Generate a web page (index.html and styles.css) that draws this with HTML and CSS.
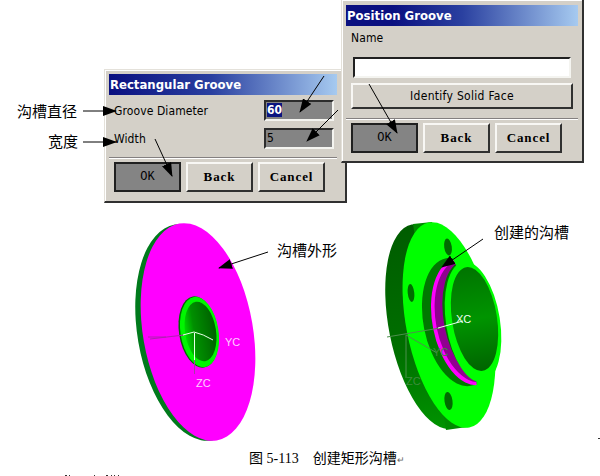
FILE: index.html
```html
<!DOCTYPE html>
<html lang="zh-CN">
<head>
  <meta charset="UTF-8">
  <title>图 5-113 创建矩形沟槽</title>
  <link rel="stylesheet" href="styles.css">
</head>
<body>
  <div class="figure">

    <!-- Dialogs -->
    <div class="dialog rect-groove">
      <div class="title">Rectangular Groove</div>
      <div class="fields">
        <div class="field"><span class="label">Groove Diameter</span><span class="value"><b>60</b></span></div>
        <div class="field"><span class="label">Width</span><span class="value">5</span></div>
      </div>
      <div class="buttons">
        <button class="btn ok">OK</button>
        <button class="btn">Back</button>
        <button class="btn">Cancel</button>
      </div>
    </div>

    <div class="dialog pos-groove">
      <div class="title">Position Groove</div>
      <div class="name-block">
        <span class="label">Name</span>
        <div class="name-input"></div>
        <button class="wide-btn">Identify Solid Face</button>
      </div>
      <div class="buttons">
        <button class="btn ok">OK</button>
        <button class="btn">Back</button>
        <button class="btn">Cancel</button>
      </div>
    </div>

    <!-- Solid models and arrows -->
    <svg class="drawing" width="600" height="476" viewBox="0 0 600 476">
      <defs>
        <marker id="head" markerWidth="14" markerHeight="10" refX="13" refY="5" orient="auto" markerUnits="userSpaceOnUse">
          <path d="M0 0L14 5L0 10z"/>
        </marker>
        <linearGradient id="bore">
          <stop offset="0" stop-color="#00d800"/>
          <stop offset="0.3" stop-color="#009000"/>
          <stop offset="1" stop-color="#006000"/>
        </linearGradient>
        <linearGradient id="hubBore" x1="0" y1="0" x2="0" y2="1">
          <stop offset="0" stop-color="#007400"/>
          <stop offset="0.5" stop-color="#009400"/>
          <stop offset="1" stop-color="#006400"/>
        </linearGradient>
        <linearGradient id="rim" x1="0" y1="0" x2="0" y2="1">
          <stop offset="0" stop-color="#005c00"/>
          <stop offset="0.6" stop-color="#007000"/>
          <stop offset="1" stop-color="#009400"/>
        </linearGradient>
        <clipPath id="grooveSide">
          <path d="M410 250H448L474 300L477 400H410z"/>
        </clipPath>
      </defs>

      <!-- groove shape -->
      <ellipse cx="193.500" cy="332.500" rx="56" ry="109.500" transform="rotate(-9.8 193.500 332.500)" fill="#007a1c"/>
      <ellipse cx="198" cy="332" rx="55" ry="110" transform="rotate(-9.8 198 332)" fill="#f0f"/>
      <ellipse cx="198.500" cy="332" rx="19.500" ry="36" transform="rotate(-9 198.500 332)" fill="#006a00"/>
      <ellipse cx="199.500" cy="332" rx="19" ry="35.500" transform="rotate(-9 199.500 332)" fill="#00f600"/>
      <ellipse cx="200.500" cy="331.500" rx="15.500" ry="30" transform="rotate(-9 200.500 331.500)" fill="url(#bore)"/>
      <path d="M148 337H166M150 339L184 335" stroke="#b020b0" fill="none"/>
      <path d="M183 335L194 332Q203 334 213 340M194.500 333V360" stroke="#e8ffe8" fill="none"/>
      <path d="M194.500 360V374" stroke="#a040a0" fill="none"/>
      <text x="225" y="346" class="axis">YC</text>
      <text x="196" y="387" class="axis">ZC</text>

      <!-- finished flange -->
      <ellipse cx="432" cy="326.500" rx="43" ry="104" transform="rotate(-11.200 432 326.500)" fill="url(#rim)"/>
      <path d="M413 224L432 222L467 427L446 430z" fill="#008a00"/>
      <ellipse cx="449" cy="325" rx="42.600" ry="104.500" transform="rotate(-11.200 449 325)" fill="#0f0"/>
      <g fill="#006c00">
        <ellipse cx="448" cy="247" rx="3.800" ry="8.500" transform="rotate(-8 448 247)"/>
        <ellipse cx="411" cy="293" rx="3.300" ry="9" transform="rotate(-6 411 293)"/>
        <ellipse cx="448.500" cy="401" rx="4" ry="9" transform="rotate(-8 448.500 401)"/>
      </g>
      <g clip-path="url(#grooveSide)">
        <ellipse cx="458.500" cy="322" rx="35" ry="65" transform="rotate(-11 458.500 322)" fill="#007800"/>
        <ellipse cx="467" cy="322" rx="34.500" ry="64" transform="rotate(-11 467 322)" fill="#f0f"/>
        <ellipse cx="470" cy="321" rx="34" ry="62" transform="rotate(-11 470 321)" fill="#900090"/>
        <ellipse cx="474" cy="321" rx="30" ry="61" transform="rotate(-11 474 321)" fill="#007000"/>
      </g>
      <ellipse cx="473" cy="322" rx="27" ry="61" transform="rotate(-9 473 322)" fill="#0f0"/>
      <ellipse cx="474.500" cy="319" rx="22.500" ry="52.500" transform="rotate(-9 474.500 319)" fill="url(#hubBore)"/>
      <path d="M387 337L440 328M406 335L437 353M406 335V378" stroke="#4d8f4d" fill="none"/>
      <path d="M438 328L463 321" stroke="#e8ffe8" fill="none"/>
      <text x="456" y="323" class="axis light">XC</text>
      <text x="433" y="356" class="axis dim">YC</text>
      <text x="406" y="385" class="axis dim">ZC</text>

      <!-- arrows -->
      <g class="arrows">
        <path d="M83 111H116" marker-end="url(#head)"/>
        <path d="M83 142H116" marker-end="url(#head)"/>
        <path d="M155 139L172 176" marker-end="url(#head)"/>
        <path d="M324 76L300 112" marker-end="url(#head)"/>
        <path d="M338 110L307 141" marker-end="url(#head)"/>
        <path d="M369 84L397 133" marker-end="url(#head)"/>
        <path d="M268 252L219 268" marker-end="url(#head)"/>
        <path d="M483 239L442 267" marker-end="url(#head)"/>
      </g>

      <!-- tops of the next text line -->
      <path d="M65 475.500h2M69 475.500h1M94 475.500h1M106 475.500h2M111 475.500h1M114 475.500h1M118 475.500h1M598 438.500h2" stroke="#333"/>
    </svg>

    <!-- Callouts -->
    <span class="note diameter">沟槽直径</span>
    <span class="note width">宽度</span>
    <span class="note shape">沟槽外形</span>
    <span class="note result">创建的沟槽</span>

    <p class="caption">图 5-113　创建矩形沟槽<small>↵</small></p>
  </div>
</body>
</html>
```
FILE: styles.css
```css
body {
  margin: 0;
  background: #fff;
  color: #000;
  overflow: hidden;
}

.figure {
  position: relative;
  width: 600px;
  height: 476px;
  overflow: hidden;
}

.dialog {
  position: absolute;
  box-sizing: border-box;
  background: #d4d0c8;
  border: 1px solid #e4e1da;
  border-right: 2px solid #303030;
  border-bottom: 2px solid #303030;
  box-shadow: inset 1px 1px #fff;
  font-family: "DejaVu Sans Condensed", "Noto Sans", sans-serif;
  font-size: 12px;
}

.rect-groove {
  left: 104px;
  top: 69px;
  width: 243px;
  height: 134px;
  padding: 4px 8px 0 4px;
}

.pos-groove {
  left: 341px;
  top: -1px;
  width: 243px;
  height: 164px;
  padding: 5px 4px 0;
}

.title {
  height: 21px;
  line-height: 21px;
  padding-left: 1px;
  background: linear-gradient(to right, #0a1080, #2a40a0 45%, #a6caf0);
  color: #fff;
  font-size: 13px;
  font-weight: bold;
  white-space: nowrap;
}

.pos-groove .title {
  background: linear-gradient(to right, #0a1080 20%, #2a40a0 50%, #a6caf0);
}

.fields {
  display: flex;
  flex-direction: column;
  gap: 7px;
  padding: 5px 3px 8px 5px;
}

.field {
  display: flex;
  justify-content: space-between;
  align-items: center;
}

.label {
  letter-spacing: 0.1px;
}

.value {
  box-sizing: border-box;
  width: 70px;
  height: 21px;
  padding-left: 1px;
  background: #848484;
  border: 2px solid #2c2c2c;
  border-right-color: #f4f4f0;
  border-bottom-color: #f4f4f0;
  line-height: 17px;
}

.value b {
  display: inline-block;
  height: 14px;
  line-height: 14px;
  background: #0a1480;
  color: #fff;
}

.name-block {
  display: flex;
  flex-direction: column;
  height: 92px;
  box-sizing: border-box;
  padding: 5px 5px 0;
}

.name-block .label {
  height: 26px;
}

.name-input {
  height: 17px;
  margin: 0 2px 5px;
  background: #fff;
  border: 2px solid #202020;
  border-right-color: #f4f4f0;
  border-bottom-color: #f4f4f0;
}

.buttons {
  display: flex;
  gap: 5px;
  padding: 4px 5px 0;
  border-top: 1px solid #848080;
  box-shadow: inset 0 1px #fff;
}

.btn,
.wide-btn {
  box-sizing: border-box;
  padding: 0;
  background: #d4d0c8;
  border: 2px solid #f8f7f4;
  border-right-color: #303030;
  border-bottom-color: #303030;
  color: #000;
}

.btn {
  width: 67px;
  height: 30px;
  font: bold 13px "Liberation Serif", serif;
  letter-spacing: 0.9px;
}

.btn.ok {
  background: #848484;
  border-color: #202020;
  font: 12px "Liberation Mono", monospace;
  letter-spacing: 0;
}

.wide-btn {
  height: 26px;
  font: 12px "DejaVu Sans Condensed", "Noto Sans", sans-serif;
  letter-spacing: 0.3px;
}

.drawing {
  position: absolute;
  left: 0;
  top: 0;
}

.arrows path {
  fill: none;
  stroke: #000;
}

.axis {
  font: 11px "Liberation Sans", sans-serif;
  fill: #ffd0ff;
}

.axis.light {
  fill: #f0fff0;
}

.axis.dim {
  fill: #3c8c3c;
}

.note {
  position: absolute;
  font: 15px/18px "Noto Sans CJK SC", sans-serif;
  white-space: nowrap;
}

.diameter { left: 17px; top: 102px; }
.width { left: 48px; top: 132px; }
.shape { left: 277px; top: 241px; }
.result { left: 494px; top: 223px; }

.caption {
  position: absolute;
  left: 249px;
  top: 450px;
  margin: 0;
  font: 14px/18px "Liberation Serif", "Noto Sans CJK SC", serif;
  white-space: nowrap;
}

.caption small {
  font-size: 9px;
  color: #666;
}
```
